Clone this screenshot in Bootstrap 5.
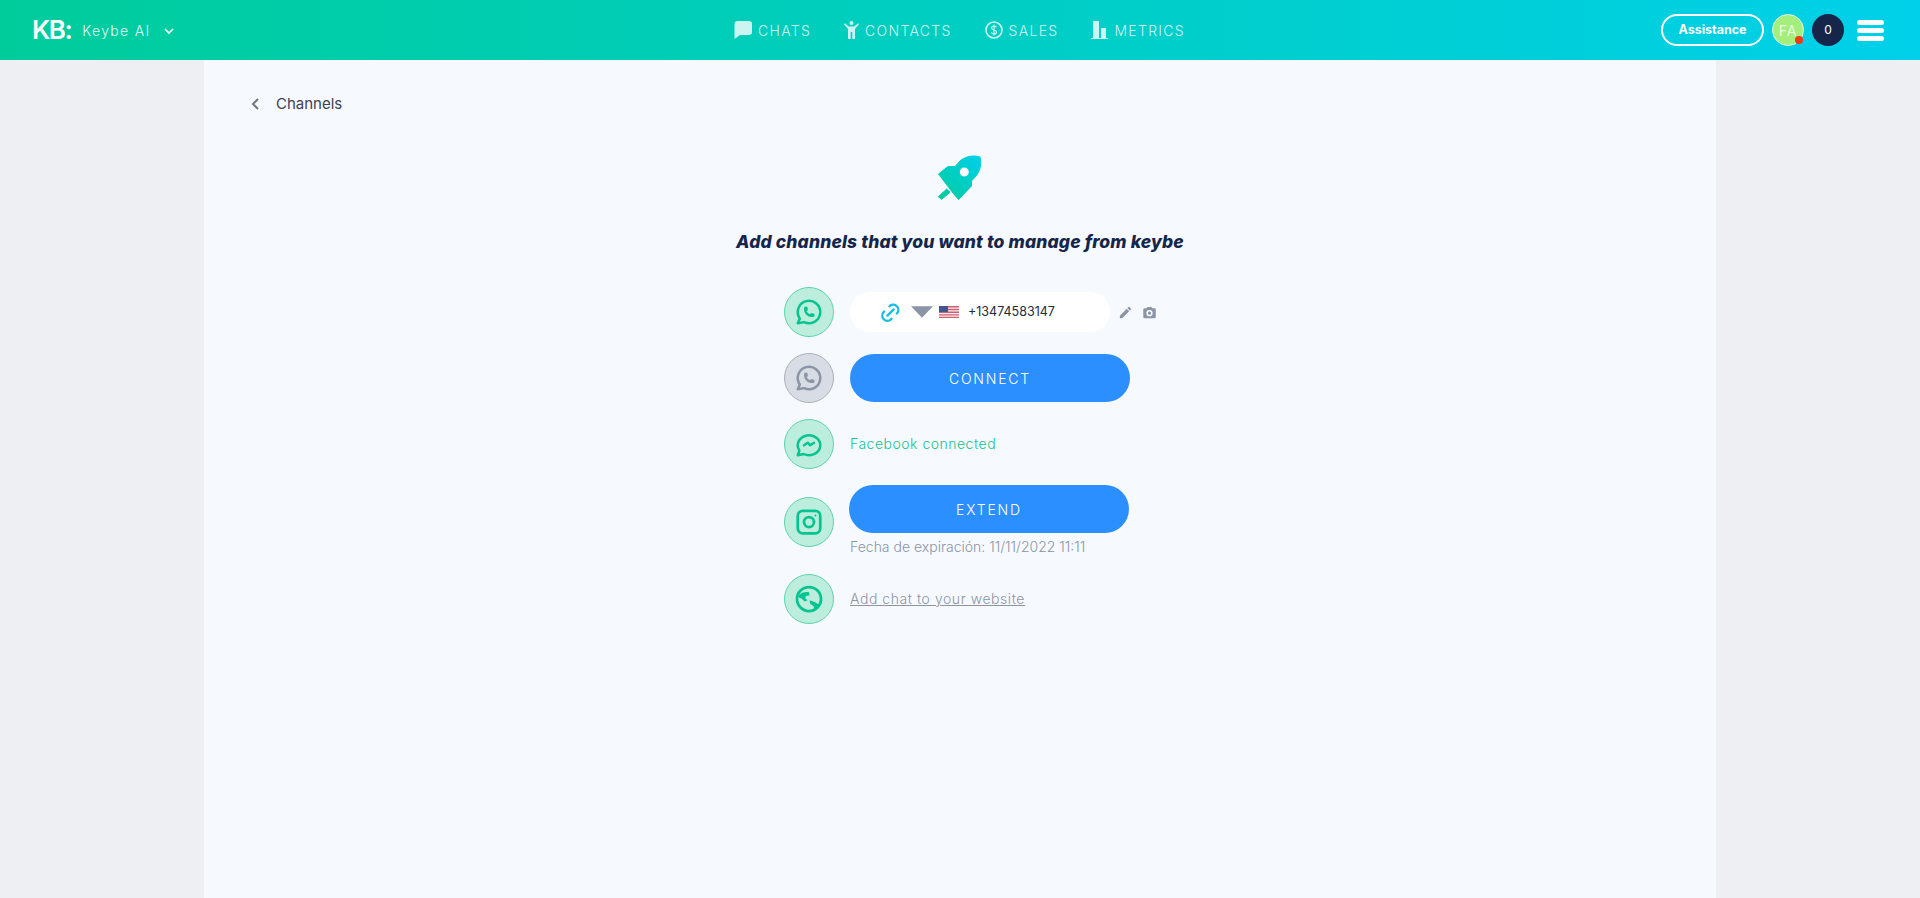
<!DOCTYPE html>
<html lang="en">
<head>
  <meta charset="UTF-8">
  <title>Keybe channels</title>
  <link href="https://cdn.jsdelivr.net/npm/bootstrap@5.3.3/dist/css/bootstrap.min.css" rel="stylesheet">
  <style>
    body {
      font-family: "Inter", "Liberation Sans", sans-serif;
      background: #edeff3;
      min-height: 898px;
      overflow: hidden;
    }
    .kb-header {
      height: 60px;
      background: linear-gradient(90deg, #00cc9b 0%, #00d0e9 100%);
      padding: 0 36px 0 32px;
      color: #fff;
    }
    .kb-side { flex: 1 1 0; }
    .kb-logo { font-size: 26px; font-weight: 600; letter-spacing: -1.5px; line-height: 1; }
    .kb-app { font-size: 14px; font-weight: 300; letter-spacing: 1.3px; margin-left: 11px; opacity: .9; }
    .kb-caret { margin-left: 14px; margin-top: 3px; }
    .kb-menu { gap: 33px; margin-left: 3px; }
    .kb-menu-item { font-size: 14px; font-weight: 300; letter-spacing: 1.3px; color: rgba(255, 255, 255, .8); gap: 6px; }
    .kb-assist {
      width: 103px; height: 32px; padding: 0;
      border: 2px solid #fff; border-radius: 16px;
      color: #fff; background: transparent;
      font-size: 12.5px; font-weight: 700;
    }
    .kb-avatar, .kb-count {
      width: 32px; height: 32px; border-radius: 50%;
      font-size: 13px;
    }
    .kb-avatar { background: #a3ee7c; border: 1px solid #e2fbe0; color: rgba(255,255,255,.8); margin-left: 8px; font-size: 14px; letter-spacing: 1px; }
    .kb-status { width: 8px; height: 8px; border-radius: 50%; background: #f0390f; right: 0; bottom: 1px; }
    .kb-count { background: #15264a; color: #fff; margin-left: 8px; font-size: 12px; }
    .kb-burger { width: 27px; margin-left: 13px; gap: 3px; }
    .kb-burger span { display: block; height: 5px; border-radius: 3px; background: #fff; }
    .kb-panel {
      width: 1512px;
      height: 838px;
      margin: 0 auto;
      background: #f6fafe;
      padding-top: 32px;
    }
    .kb-back { margin-left: 47px; height: 24px; font-size: 15px; color: #3b4358; gap: 17px; }
    .kb-rocket { display: block; margin: 34px auto 0; }
    .kb-title {
      font-size: 17.5px; font-weight: 800; font-style: italic;
      color: #15264a; text-align: center;
      margin: 25px 0 0; line-height: 24px; letter-spacing: .15px;
    }
    .kb-list { margin: 33px 0 0 580px; gap: 16px; }
    .kb-row { gap: 16px; }
    .kb-round {
      width: 50px; height: 50px; border-radius: 50%; flex: none;
      background: #bdeedd; border: 1px solid #5cd3ac; color: #06c48f;
    }
    .kb-round-off { background: #d8dde5; border-color: #a8b0bc; color: #8b95a5; }
    .kb-pill {
      width: 260px; height: 40px; border-radius: 20px; background: #fff;
      padding-left: 28px; font-size: 12.5px; color: #222b3a;
    }
    .kb-caret-grey { margin-left: 8px; }
    .kb-flag { margin-left: 6px; }
    .kb-phone { margin-left: 9px; }
    .kb-tools { margin-left: -8px; gap: 9px; color: #8b95a5; }
    .kb-action {
      width: 280px; height: 48px; border: 0; border-radius: 24px;
      background: #2b8fff; color: #fff;
      font-size: 14px; font-weight: 300; letter-spacing: 1.8px;
    }
    .kb-action:hover { background: #2b8fff; color: #fff; }
    .kb-extend { margin-left: -1px; }
    .kb-connected { color: #14c394; font-size: 14px; font-weight: 300; letter-spacing: .5px; margin-bottom: 2px; }
    .kb-expire { color: #8b95a5; font-size: 14px; font-weight: 300; line-height: 26px; letter-spacing: 0; margin: 1px 0 -1px; }
    .kb-widget { color: #8b95a5; font-size: 14px; font-weight: 300; text-decoration: underline; letter-spacing: .55px; margin-bottom: 1px; }
    .kb-widget:hover { color: #8b95a5; }
    .kb-last { margin-top: -1px; }
  </style>
</head>
<body>

<header class="kb-header d-flex align-items-center">
  <div class="kb-side d-flex align-items-center">
    <span class="kb-logo">KB:</span>
    <span class="kb-app">Keybe AI</span>
    <svg class="kb-caret" width="10" height="7" viewBox="0 0 10 7" fill="none" stroke="#fff" stroke-width="1.6"><path d="M1 1l4 4 4-4"/></svg>
  </div>
  <nav class="kb-menu d-flex align-items-center">
    <div class="kb-menu-item d-flex align-items-center">
      <svg width="18" height="18" viewBox="0 0 18 18" fill="currentColor"><path d="M4 0h11a3 3 0 0 1 3 3v8a3 3 0 0 1-3 3H6l-5.500 4V3a3 3 0 0 1 3-3z"/></svg>
      CHATS
    </div>
    <div class="kb-menu-item d-flex align-items-center">
      <svg width="15" height="18" viewBox="0 0 15 18" fill="currentColor"><circle cx="7.500" cy="2" r="2"/><path d="M0 3.200l.9-.9L4.800 5.500h5.400l3.900-3.200.9.9L11 8v10H8.300v-7H6.700v7H4V8z"/></svg>
      CONTACTS
    </div>
    <div class="kb-menu-item d-flex align-items-center">
      <svg width="18" height="18" viewBox="0 0 18 18" fill="none" stroke="currentColor"><circle cx="9" cy="9" r="8" stroke-width="1.600"/><path d="M11.500 6.500C11 5.200 9.800 5 9 5 7.500 5 6.500 5.800 6.500 7c0 2.600 5 1.400 5 4 0 1.200-1 2-2.500 2-1 0-2.200-.4-2.600-1.600M9 3.500v11" stroke-width="1.200"/></svg>
      SALES
    </div>
    <div class="kb-menu-item d-flex align-items-center">
      <svg width="17" height="18" viewBox="0 0 17 18" fill="currentColor"><path d="M2 0h6v17H2zM10 7h5v10h-5zM0 17h17v1H0z"/></svg>
      METRICS
    </div>
  </nav>
  <div class="kb-side d-flex align-items-center justify-content-end">
    <button class="btn kb-assist" type="button">Assistance</button>
    <div class="kb-avatar position-relative d-flex align-items-center justify-content-center">FA<span class="kb-status position-absolute"></span></div>
    <div class="kb-count d-flex align-items-center justify-content-center">0</div>
    <div class="kb-burger d-flex flex-column"><span></span><span></span><span></span></div>
  </div>
</header>

<main class="kb-panel">
  <div class="kb-back d-flex align-items-center">
    <svg width="8" height="12" viewBox="0 0 8 12" fill="none" stroke="#6f7785" stroke-width="2"><path d="M7 1L2 6l5 5"/></svg>
    Channels
  </div>

  <svg class="kb-rocket" width="60" height="55" viewBox="0 0 60 55">
    <defs>
      <linearGradient id="rocketFill" gradientUnits="userSpaceOnUse" x1="8" y1="50" x2="50" y2="7">
        <stop offset="0" stop-color="#00cc9b"/>
        <stop offset="1" stop-color="#00d0e9"/>
      </linearGradient>
    </defs>
    <path fill="url(#rocketFill)" stroke="url(#rocketFill)" stroke-linejoin="round" fill-rule="evenodd" d="M50 7c2 7 0 14-4 19l-4.500 5v5l-13 13.500L23 43 8.500 24 18 16.500h7L31 10c6-4 13-5 19-3zM34.300 17a5 5 0 1 0 0 10 5 5 0 0 0 0-10z"/>
    <path fill="url(#rocketFill)" stroke="url(#rocketFill)" stroke-linejoin="round" d="M8.300 46.700L16.700 39l3.300 3.300-8.300 7z"/>
  </svg>
  <h1 class="kb-title">Add channels that you want to manage from keybe</h1>

  <div class="kb-list d-flex flex-column">
    <div class="kb-row d-flex align-items-center">
      <div class="kb-round d-flex align-items-center justify-content-center">
        <svg width="30" height="30" viewBox="0 0 24 24" fill="none" stroke="currentColor" stroke-width="2" stroke-linecap="round" stroke-linejoin="round"><path d="M3 21l1.650-3.800a9 9 0 1 1 3.400 2.900L3 21"/><path d="M9 10a.5.5 0 0 0 1 0V9a.5.5 0 0 0-1 0v1a5 5 0 0 0 5 5h1a.5.5 0 0 0 0-1h-1a.5.5 0 0 0 0 1"/></svg>
      </div>
      <div class="kb-pill d-flex align-items-center">
        <svg width="25" height="25" viewBox="0 0 24 24" fill="none" stroke="#14bfe6" stroke-width="2.200" stroke-linecap="round" stroke-linejoin="round"><path d="M9 15l6-6"/><path d="M11 6l.5-.5a5 5 0 0 1 7 7l-.5.5"/><path d="M13 18l-.4.5a5 5 0 0 1-7.100 0 5 5 0 0 1 0-7l.5-.5"/></svg>
        <svg class="kb-caret-grey" width="22" height="12" viewBox="0 0 23 12" fill="#8b95a5"><path d="M0 0h23L11.500 12z"/></svg>
        <svg class="kb-flag" width="20" height="12" viewBox="0 0 20 12"><rect width="20" height="12" fill="#f2f2f5"/><path d="M0 0h20v1.400H0zM0 2.800h20v1.400H0zM0 5.500h20v1.400H0zM0 8.200h20v1.400H0zM0 10.800h20V12H0z" fill="#cf5f6f"/><rect width="9" height="6" fill="#44558f"/></svg>
        <span class="kb-phone">+13474583147</span>
      </div>
      <div class="kb-tools d-flex align-items-center">
        <svg width="15" height="15" viewBox="0 0 24 24" fill="currentColor"><path d="M3 17.250V21h3.750L17.800 9.940l-3.750-3.750L3 17.250zM20.700 7.040a1 1 0 0 0 0-1.410l-2.340-2.340a1 1 0 0 0-1.410 0l-1.830 1.830 3.750 3.750 1.830-1.830z"/></svg>
        <svg width="15" height="15" viewBox="0 0 24 24" fill="currentColor"><path fill-rule="evenodd" d="M9 3L7.200 5H4a2 2 0 0 0-2 2v12a2 2 0 0 0 2 2h16a2 2 0 0 0 2-2V7a2 2 0 0 0-2-2h-3.200L15 3H9zm3 15a5 5 0 1 1 0-10 5 5 0 0 1 0 10zm0-2.500a2.500 2.500 0 1 0 0-5 2.500 2.500 0 0 0 0 5z"/></svg>
      </div>
    </div>

    <div class="kb-row d-flex align-items-center">
      <div class="kb-round kb-round-off d-flex align-items-center justify-content-center">
        <svg width="30" height="30" viewBox="0 0 24 24" fill="none" stroke="currentColor" stroke-width="2" stroke-linecap="round" stroke-linejoin="round"><path d="M3 21l1.650-3.800a9 9 0 1 1 3.400 2.900L3 21"/><path d="M9 10a.5.5 0 0 0 1 0V9a.5.5 0 0 0-1 0v1a5 5 0 0 0 5 5h1a.5.5 0 0 0 0-1h-1a.5.5 0 0 0 0 1"/></svg>
      </div>
      <button class="btn kb-action" type="button">CONNECT</button>
    </div>

    <div class="kb-row d-flex align-items-center">
      <div class="kb-round d-flex align-items-center justify-content-center">
        <svg width="30" height="30" viewBox="0 0 24 24" fill="none" stroke="currentColor" stroke-width="2" stroke-linecap="round" stroke-linejoin="round"><path d="M3 21l1.300-3.900A9 8 0 1 1 7.700 20L3 21"/><path d="M8 13l3-2 2 2 3-2"/></svg>
      </div>
      <span class="kb-connected">Facebook connected</span>
    </div>

    <div class="kb-row d-flex align-items-center">
      <div class="kb-round d-flex align-items-center justify-content-center">
        <svg width="30" height="30" viewBox="0 0 24 24" fill="none" stroke="currentColor" stroke-width="2.200"><rect x="3" y="3" width="18" height="18" rx="4"/><circle cx="12" cy="12" r="4"/><circle cx="17.200" cy="6.800" r=".8" fill="currentColor" stroke="none"/></svg>
      </div>
      <div class="d-flex flex-column">
        <button class="btn kb-action kb-extend" type="button">EXTEND</button>
        <span class="kb-expire">Fecha de expiración: 11/11/2022 11:11</span>
      </div>
    </div>

    <div class="kb-row kb-last d-flex align-items-center">
      <div class="kb-round d-flex align-items-center justify-content-center">
        <svg width="30" height="30" viewBox="0 0 24 24"><circle cx="12" cy="12" r="9.600" fill="none" stroke="currentColor" stroke-width="2.200"/><path fill="currentColor" d="M4 9c2-2.500 5-3 8-2.500l.5 2.500-3 .5-.5 2 2 1.500-2.500 1L6 11.500 4 11zM12.500 13l4.500 1.500 3 2-3.500 3.500-1-2.500-2.500-1.500z"/></svg>
      </div>
      <a class="kb-widget" href="#">Add chat to your website</a>
    </div>
  </div>
</main>

<script src="https://cdn.jsdelivr.net/npm/bootstrap@5.3.3/dist/js/bootstrap.bundle.min.js"></script>
</body>
</html>
